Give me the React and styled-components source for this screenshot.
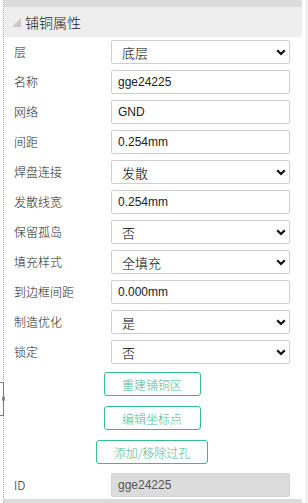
import React from "react";
import styled, { createGlobalStyle } from "styled-components";

const Global = createGlobalStyle`
  html, body { margin: 0; padding: 0; background: #fff; }
  body { font-family: "Liberation Sans", "Noto Sans CJK SC", sans-serif; }
  * { box-sizing: border-box; }
`;

const Page = styled.div`
  position: relative;
  display: flex;
  width: 308px;
  height: 503px;
  background: #fff;
  padding-left: 3px;
`;

const Handle = styled.div`
  position: absolute;
  left: 0;
  top: 382px;
  width: 4px;
  height: 34px;
  border: 1px solid #7a7a7a;
  border-left: none;
  background: #fff;
  &::after {
    content: "";
    position: absolute;
    right: -2px;
    top: 13px;
    width: 3px;
    height: 5px;
    border-radius: 2px;
    background: #888;
  }
`;

const Panel = styled.div`
  width: 299px;
  height: 503px;
  border-left: 1px dotted #a8a8a8;
  display: flex;
  flex-direction: column;
`;

const TopBar = styled.div`
  height: 7px;
  background: #dcdcdc;
`;

const Header = styled.div`
  height: 30px;
  background: #eeeeee;
  display: flex;
  align-items: center;
  gap: 4px;
  padding-left: 8px;
  font-family: "Noto Sans CJK SC", sans-serif;
  font-size: 14px;
  font-weight: 300;
  color: #222;
`;

const Body = styled.div`
  flex: 1;
  padding: 3px 12px 0 10px;
  display: flex;
  flex-direction: column;
`;

const Row = styled.div`
  display: grid;
  grid-template-columns: 97px 179px;
  align-items: center;
  height: 24px;
  margin-bottom: ${(p) => p.$gap ?? 6}px;
`;

const Label = styled.div`
  font-family: "Noto Sans CJK SC", sans-serif;
  font-size: 12px;
  font-weight: 300;
  color: #1e1e1e;
  line-height: 1;
`;

const TextInput = styled.input`
  width: 179px;
  height: 24px;
  border: 1px solid #cfcfcf;
  border-radius: 2px;
  padding: 0 0 0 6px;
  font-family: "Liberation Sans", "Noto Sans CJK SC", sans-serif;
  font-size: 12px;
  color: #222;
  background: ${(p) => (p.disabled ? "#dcdcdc" : "#fff")};
  ${(p) => p.disabled && "color: #555; border-color: #d4d4d4;"}
  outline: none;
`;

const SelectWrap = styled.div`
  position: relative;
  width: 179px;
  height: 24px;
`;

const Select = styled.select`
  appearance: none;
  -webkit-appearance: none;
  width: 100%;
  height: 100%;
  border: 1px solid #cfcfcf;
  border-radius: 2px;
  padding: 0 0 0 10px;
  font-family: "Noto Sans CJK SC", sans-serif;
  font-size: 13px;
  font-weight: 300;
  color: #000;
  background: #fff;
  outline: none;
`;

const Chevron = styled.svg`
  position: absolute;
  right: 4px;
  top: 9px;
  pointer-events: none;
`;

const Actions = styled.div`
  display: flex;
  flex-direction: column;
  align-items: center;
  gap: 10px;
  margin: 0 0 9px;
`;

const Button = styled.button`
  width: ${(p) => p.$w}px;
  height: 24px;
  border: 1px solid #2fbf8e;
  border-radius: 3px;
  background: #fff;
  color: #45bb92;
  font-family: "Noto Sans CJK SC", sans-serif;
  font-size: 12px;
  font-weight: 300;
  padding: 0;
  cursor: pointer;
`;

const BottomBar = styled.div`
  height: 4px;
  background: #dcdcdc;
`;

const Gutter = styled.div`
  width: 3px;
  margin-left: 3px;
  background: #efefef;
`;

const Triangle = () => (
  <svg width="9" height="9" viewBox="0 0 9 9">
    <polygon points="9,0 9,9 0,9" fill="#c8c8c8" />
  </svg>
);

const Sel = ({ value }) => (
  <SelectWrap>
    <Select defaultValue={value}>
      <option value={value}>{value}</option>
    </Select>
    <Chevron width="10" height="7" viewBox="0 0 10 7">
      <path d="M1.2 1.2 L5 5 L8.8 1.2" fill="none" stroke="#111" strokeWidth="2.2" />
    </Chevron>
  </SelectWrap>
);

const rows = [
  ["层", "select", "底层"],
  ["名称", "input", "gge24225"],
  ["网络", "input", "GND"],
  ["间距", "input", "0.254mm"],
  ["焊盘连接", "select", "发散"],
  ["发散线宽", "input", "0.254mm"],
  ["保留孤岛", "select", "否"],
  ["填充样式", "select", "全填充"],
  ["到边框间距", "input", "0.000mm"],
  ["制造优化", "select", "是"],
  ["锁定", "select", "否"],
];

export default function App() {
  return (
    <>
      <Global />
      <Page>
        <Handle />
        <Panel>
          <TopBar />
          <Header>
            <Triangle />
            <span>铺铜属性</span>
          </Header>
          <Body>
            {rows.map(([label, kind, value], i) => (
              <Row key={label} $gap={i === rows.length - 1 ? 8 : 6}>
                <Label>{label}</Label>
                {kind === "select" ? (
                  <Sel value={value} />
                ) : (
                  <TextInput defaultValue={value} />
                )}
              </Row>
            ))}
            <Actions>
              <Button $w={97}>重建铺铜区</Button>
              <Button $w={97}>编辑坐标点</Button>
              <Button $w={112}>添加/移除过孔</Button>
            </Actions>
            <Row $gap={2}>
              <Label>ID</Label>
              <TextInput defaultValue="gge24225" disabled />
            </Row>
          </Body>
          <BottomBar />
        </Panel>
        <Gutter />
      </Page>
    </>
  );
}
